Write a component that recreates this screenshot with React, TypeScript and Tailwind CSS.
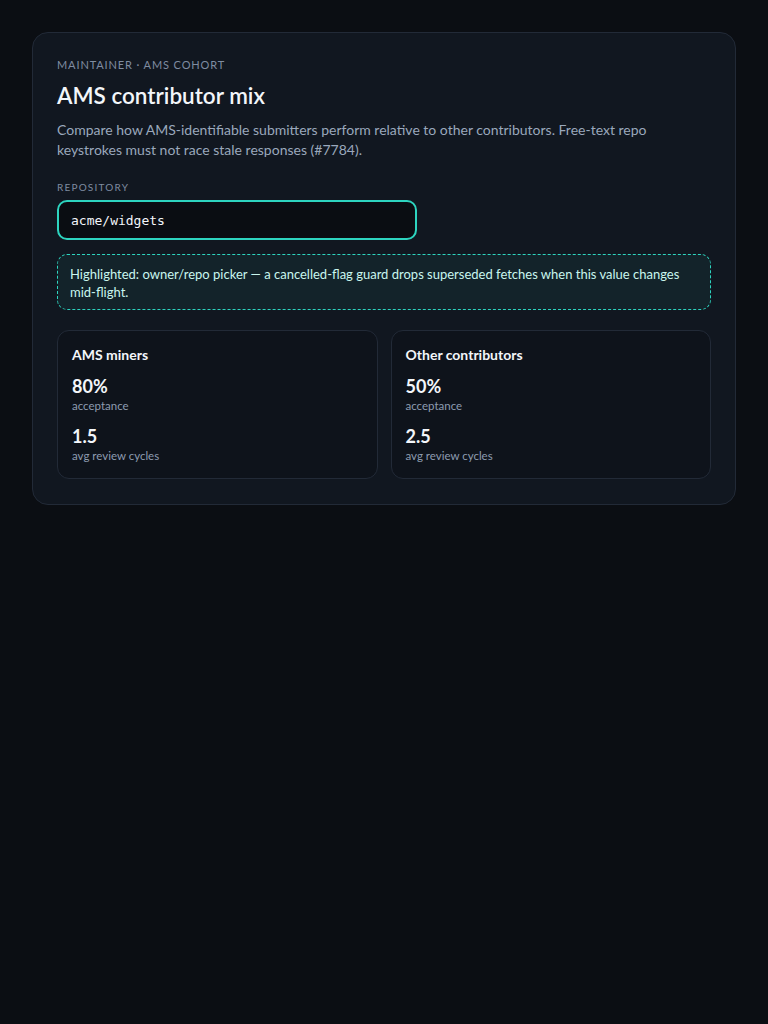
import { useEffect, useState } from "react";

type Cohort = {
  title: string;
  acceptance: string;
  cycles: string;
};

const cohorts: Cohort[] = [
  { title: "AMS miners", acceptance: "80%", cycles: "1.5" },
  { title: "Other contributors", acceptance: "50%", cycles: "2.5" },
];

const CohortCard = ({ cohort }: { cohort: Cohort }) => {
  return (
    <div className="rounded-xl border border-[#222a37] bg-[#0e131b] px-[14px] pt-[15px] pb-[13px]">
      <div className="text-[14px] font-bold leading-[18px] text-[#f3f6fa]">
        {cohort.title}
      </div>
      <div className="mt-[11px] text-[18px] font-bold leading-[22px] text-[#f3f6fa]">
        {cohort.acceptance}
      </div>
      <div className="text-[11.5px] leading-[18px] text-[#8d9bb0]">acceptance</div>
      <div className="mt-[10px] text-[18px] font-bold leading-[22px] text-[#f3f6fa]">
        {cohort.cycles}
      </div>
      <div className="text-[11.5px] leading-[18px] text-[#8d9bb0]">
        avg review cycles
      </div>
    </div>
  );
};

const App = () => {
  const [repo, setRepo] = useState("acme/widgets");

  useEffect(() => {
    let cancelled = false;
    Promise.resolve(repo).then(() => {
      if (cancelled) return;
    });
    return () => {
      cancelled = true;
    };
  }, [repo]);

  return (
    <div
      className="min-h-[1024px] bg-[#0b0e13] p-[32px]"
      style={{ fontFamily: 'Lato, "Noto Sans", sans-serif' }}
    >
      <div className="rounded-[16px] border border-[#222a37] bg-[#111720] px-[24px] pt-[25px] pb-[25px]">
        <div className="text-[11px] uppercase leading-[14px] tracking-[0.08em] text-[#7f8ca0]">
          Maintainer · AMS cohort
        </div>
        <h1 className="mt-[9px] text-[22.5px] font-semibold leading-[30px] text-[#f3f6fa]">
          AMS contributor mix
        </h1>
        <p className="mt-[9px] text-[14px] leading-[20px] text-[#9aa8bc]">
          Compare how AMS-identifiable submitters perform relative to other
          contributors. Free-text repo keystrokes must not race stale responses
          (#7784).
        </p>

        <label className="mt-[20px] block text-[10px] uppercase leading-[14px] tracking-[0.12em] text-[#7f8ca0]">
          Repository
        </label>
        <input
          value={repo}
          onChange={(e) => setRepo(e.target.value)}
          className="mt-[6px] block h-[40px] w-[360px] rounded-[10px] border-2 border-[#2dd4bf] bg-[#0a0d12] px-[12px] text-[13px] text-[#f3f6fa] outline-none"
          style={{ fontFamily: '"DejaVu Sans Mono", "Liberation Mono", monospace' }}
        />

        <div className="mt-[14px] rounded-[10px] border border-dashed border-[#2dd4bf] bg-[#13232a] px-[12px] pt-[10px] pb-[8px] text-[13px] leading-[18px] text-[#c9f6ee]">
          Highlighted: owner/repo picker — a cancelled-flag guard drops
          superseded fetches when this value changes mid-flight.
        </div>

        <div className="mt-[20px] grid grid-cols-2 gap-[13px]">
          {cohorts.map((c) => (
            <CohortCard key={c.title} cohort={c} />
          ))}
        </div>
      </div>
    </div>
  );
};

export default App;
